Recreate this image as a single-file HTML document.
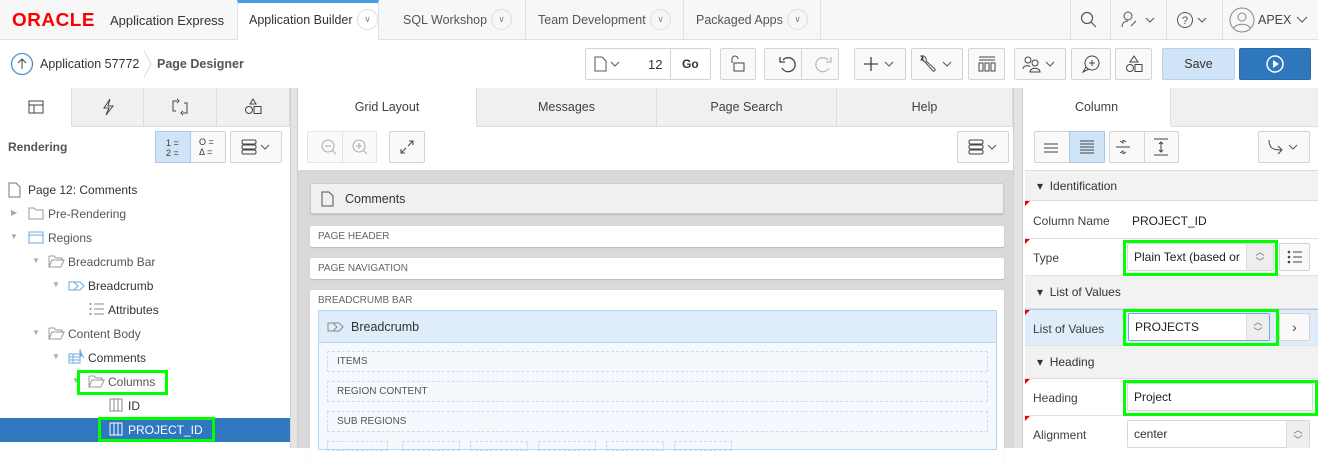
<!DOCTYPE html>
<html><head><meta charset="utf-8"><style>
*{box-sizing:border-box;margin:0;padding:0}
body{width:1318px;height:448px;overflow:hidden;font-family:"Liberation Sans",sans-serif;background:#fff;position:relative;color:#333;font-size:12px}
.a{position:absolute}
.btn{position:absolute;top:48px;height:32px;border:1px solid #d4d4d4;border-radius:2px;background:#f9f9f9;display:flex;align-items:center;justify-content:center;color:#444;font-size:13px}
.g{position:absolute;border:3px solid #00ff00}
.t{position:absolute;font-size:12px;color:#404040;white-space:nowrap}
.tab{position:absolute;top:88px;height:39px;background:#f0f0f0;border-right:1px solid #ddd;border-bottom:1px solid #ddd;display:flex;align-items:center;justify-content:center;font-size:12.5px;color:#404040}
.tab.on{background:#fff;border-bottom-color:#fff}
.box{position:absolute;background:#fff;border-radius:2px;box-shadow:0 1px 1px rgba(0,0,0,.15);font-size:10px;color:#666;padding-left:8px;display:flex;align-items:center}
.dash{position:absolute;left:327px;width:661px;height:21px;border:1px dashed #c8dff3;font-size:10px;color:#555;padding-left:9px;display:flex;align-items:center}
.hdr{position:absolute;left:1025px;width:293px;background:#f2f2f2;border-bottom:1px solid #ddd;font-size:12px;color:#333;padding-left:12px;display:flex;align-items:center}
.row{position:absolute;left:1025px;width:293px;border-bottom:1px solid #e2e2e2;font-size:12px}
.row .l{position:absolute;left:8px;color:#404040}
.row:before{content:"";position:absolute;left:0;top:0;border-top:5px solid #e00;border-right:5px solid transparent}
.sel{position:absolute;background:#fff;border:1px solid #d8d8d8;border-radius:2px;font-size:12px;color:#222;padding-left:6px;display:flex;align-items:center}
</style></head><body>
<!-- top bar -->
<div class="a" style="left:0;top:0;width:1318px;height:40px;background:#f7f7f7;border-bottom:1px solid #e0e0e0"></div>
<div class="t" style="left:12px;top:10px;font-size:18px;font-weight:bold;color:#f80000;letter-spacing:0.5px;transform:scaleX(1.05);transform-origin:left">ORACLE</div>
<div class="t" style="left:110px;top:13px;font-size:13px;color:#333">Application Express</div>
<div class="a" style="left:237px;top:0;width:142px;height:41px;background:#fff;border-top:3px solid #4a9ce0;border-left:1px solid #e0e0e0;border-right:1px solid #e0e0e0"></div>
<div class="t" style="left:249px;top:13px;font-size:12.5px;color:#333">Application Builder</div>
<div class="a" style="left:357px;top:9px;width:21px;height:21px;border:1px solid #ddd;border-radius:50%;font-size:9px;color:#888;text-align:center;line-height:19px">∨</div>
<div class="t" style="left:403px;top:13px;font-size:12.5px;color:#555">SQL Workshop</div>
<div class="a" style="left:491px;top:9px;width:21px;height:21px;border:1px solid #ddd;border-radius:50%;font-size:9px;color:#888;text-align:center;line-height:19px">∨</div>
<div class="a" style="left:525px;top:0;width:1px;height:40px;background:#e0e0e0"></div>
<div class="t" style="left:538px;top:13px;font-size:12.5px;color:#555">Team Development</div>
<div class="a" style="left:650px;top:9px;width:21px;height:21px;border:1px solid #ddd;border-radius:50%;font-size:9px;color:#888;text-align:center;line-height:19px">∨</div>
<div class="a" style="left:683px;top:0;width:1px;height:40px;background:#e0e0e0"></div>
<div class="t" style="left:696px;top:13px;font-size:12.5px;color:#555">Packaged Apps</div>
<div class="a" style="left:787px;top:9px;width:21px;height:21px;border:1px solid #ddd;border-radius:50%;font-size:9px;color:#888;text-align:center;line-height:19px">∨</div>
<div class="a" style="left:820px;top:0;width:1px;height:40px;background:#e0e0e0"></div>
<div class="a" style="left:1070px;top:0;width:1px;height:40px;background:#e0e0e0"></div>
<div class="a" style="left:1110px;top:0;width:1px;height:40px;background:#e0e0e0"></div>
<div class="a" style="left:1166px;top:0;width:1px;height:40px;background:#e0e0e0"></div>
<div class="a" style="left:1222px;top:0;width:1px;height:40px;background:#e0e0e0"></div>
<svg class="a" style="left:1080px;top:11px" width="18" height="18"><circle cx="7" cy="7" r="5.5" fill="none" stroke="#555" stroke-width="1.2"/><path d="M11 11l5 5" stroke="#555" stroke-width="1.2"/></svg>
<svg class="a" style="left:1120px;top:10px" width="40" height="20"><circle cx="8" cy="6" r="4" fill="none" stroke="#555"/><path d="M2 17c0-5 4-6 6-6M11 16l5-5" stroke="#555" fill="none"/><path d="M26 8l4 4 4-4" stroke="#555" fill="none"/></svg>
<svg class="a" style="left:1176px;top:10px" width="40" height="20"><circle cx="9" cy="10" r="7.5" fill="none" stroke="#555"/><text x="6" y="14" font-size="11" fill="#555" font-family="Liberation Sans">?</text><path d="M22 8l4 4 4-4" stroke="#555" fill="none"/></svg>
<svg class="a" style="left:1229px;top:7px" width="26" height="26"><circle cx="13" cy="13" r="12" fill="none" stroke="#888"/><circle cx="13" cy="10" r="4" fill="none" stroke="#888"/><path d="M5 21c2-5 14-5 16 0" stroke="#888" fill="none"/></svg>
<div class="t" style="left:1258px;top:13px;font-size:12.5px;color:#444">APEX</div>
<svg class="a" style="left:1296px;top:15px" width="12" height="10"><path d="M1 2l5 5 5-5" stroke="#555" fill="none"/></svg>
<!-- toolbar -->
<div class="a" style="left:0;top:88px;width:1318px;height:1px;background:#d8d8d8"></div>
<svg class="a" style="left:10px;top:52px" width="24" height="24"><circle cx="12" cy="12" r="10.5" fill="none" stroke="#4a90d9" stroke-width="1.3"/><path d="M12 17V7M8 11l4-4 4 4" stroke="#444" fill="none"/></svg>
<div class="t" style="left:40px;top:57px;font-size:12.5px;color:#333">Application 57772</div>
<svg class="a" style="left:143px;top:50px" width="10" height="28"><path d="M1 1l7 13-7 13" stroke="#ddd" fill="none"/></svg>
<div class="t" style="left:157px;top:57px;font-size:12.5px;font-weight:bold;color:#555">Page Designer</div>
<div class="btn" style="left:585px;width:126px;background:#fff;justify-content:flex-start"></div>
<svg class="a" style="left:594px;top:56px" width="30" height="16"><path d="M1 1h7l4 4v10H1z" fill="none" stroke="#555"/><path d="M17 6l4 4 4-4" stroke="#555" fill="none"/></svg>
<div class="t" style="left:648px;top:57px;font-size:13px;color:#333">12</div>
<div class="a" style="left:670px;top:48px;width:1px;height:32px;background:#d4d4d4"></div>
<div class="t" style="left:682px;top:57px;font-size:12px;font-weight:bold;color:#333">Go</div>
<div class="btn" style="left:720px;width:36px"><svg width="16" height="18"><rect x="4" y="8" width="10" height="8" fill="none" stroke="#444"/><path d="M2 8V4a3 3 0 0 1 6 0" fill="none" stroke="#444"/></svg></div>
<div class="btn" style="left:764px;width:75px"></div>
<div class="a" style="left:801px;top:48px;width:1px;height:32px;background:#d4d4d4"></div>
<svg class="a" style="left:778px;top:55px" width="20" height="20"><path d="M5 5a7 7 0 1 1-1 8" fill="none" stroke="#444" stroke-width="1.3"/><path d="M2 2v5h5" fill="none" stroke="#444" stroke-width="1.3"/></svg>
<svg class="a" style="left:813px;top:55px" width="20" height="20"><path d="M15 5a7 7 0 1 0 1 8" fill="none" stroke="#bbb" stroke-width="1.3"/><path d="M18 2v5h-5" fill="none" stroke="#bbb" stroke-width="1.3"/></svg>
<div class="btn" style="left:854px;width:52px"><svg width="34" height="16"><path d="M8 1v14M1 8h14" stroke="#444" stroke-width="1.3"/><path d="M22 6l4 4 4-4" stroke="#555" fill="none"/></svg></div>
<div class="btn" style="left:911px;width:52px"><svg width="36" height="20"><path d="M4 2a4 4 0 0 0 2 6l8 9a1.5 1.5 0 0 0 2-2l-9-8a4 4 0 0 0-5-5l2 2v2H2z" fill="none" stroke="#444"/><path d="M24 8l4 4 4-4" stroke="#555" fill="none"/></svg></div>
<div class="btn" style="left:968px;width:37px"><svg width="18" height="16"><path d="M1 1h16M1 4h16" stroke="#444"/><rect x="1" y="7" width="4" height="8" fill="none" stroke="#444"/><rect x="7" y="7" width="4" height="8" fill="none" stroke="#444"/><rect x="13" y="7" width="4" height="8" fill="none" stroke="#444"/></svg></div>
<div class="btn" style="left:1014px;width:52px"><svg width="36" height="18"><circle cx="6" cy="5" r="3" fill="none" stroke="#444"/><circle cx="13" cy="8" r="3" fill="none" stroke="#444"/><path d="M1 14c0-4 7-4 7-2M8 17c0-5 10-5 10 0z" fill="none" stroke="#444"/><path d="M24 7l4 4 4-4" stroke="#555" fill="none"/></svg></div>
<div class="btn" style="left:1071px;width:40px"><svg width="20" height="20"><circle cx="11" cy="9" r="7" fill="none" stroke="#444"/><path d="M5 13l-3 5 6-3M11 6v6M8 9h6" fill="none" stroke="#444"/></svg></div>
<div class="btn" style="left:1115px;width:37px"><svg width="18" height="18"><path d="M9 1l4 6H5z" fill="none" stroke="#444"/><circle cx="5" cy="13" r="3.5" fill="none" stroke="#444"/><rect x="10" y="9.5" width="7" height="7" fill="none" stroke="#444"/></svg></div>
<div class="btn" style="left:1162px;width:73px;background:#cfe4f7;border-color:#b6d3ee;color:#333;font-size:12.5px">Save</div>
<div class="btn" style="left:1239px;width:72px;background:#2e77bd;border-color:#2a6bab"><svg width="20" height="20"><circle cx="10" cy="10" r="8" fill="none" stroke="#fff" stroke-width="1.5"/><path d="M8 6l6 4-6 4z" fill="#fff"/></svg></div>
<!-- left panel -->
<div class="a" style="left:290px;top:88px;width:8px;height:360px;background:#e4e4e4;border-left:1px solid #d0d0d0;border-right:1px solid #d0d0d0"></div>
<div class="tab on" style="left:0;width:72px"><svg width="16" height="14"><rect x="1" y="1" width="14" height="12" fill="none" stroke="#444"/><path d="M1 5h14M6 5v8" stroke="#444"/></svg></div>
<div class="tab" style="left:72px;width:72px"><svg width="14" height="18"><path d="M9 1L3 10h5l-3 7 7-9H7z" fill="none" stroke="#444"/></svg></div>
<div class="tab" style="left:144px;width:73px"><svg width="18" height="18"><path d="M6 3H2v10h3M12 15h4V5h-3" fill="none" stroke="#444"/><path d="M6 1l2 2-2 2M12 13l-2 2 2 2" fill="none" stroke="#444"/></svg></div>
<div class="tab" style="left:217px;width:73px"><svg width="18" height="18"><path d="M9 1l3 5H6z" fill="none" stroke="#444"/><circle cx="5" cy="12" r="3.5" fill="none" stroke="#444"/><rect x="10" y="8.5" width="7" height="7" fill="none" stroke="#444"/></svg></div>
<div class="t" style="left:8px;top:140px;font-size:12px;font-weight:bold;color:#555">Rendering</div>
<div class="a" style="left:155px;top:131px;width:71px;height:32px;border:1px solid #cfcfcf;border-radius:2px;background:#f9f9f9"></div>
<div class="a" style="left:155px;top:131px;width:36px;height:32px;border:1px solid #a9c9e8;background:#cfe4f7;font-size:9px;line-height:10px;padding:6px 0 0 10px;color:#333">1 =<br>2 =</div>
<div class="a" style="left:199px;top:137px;font-size:9px;line-height:10px;color:#333">O =<br>Δ =</div>
<div class="btn" style="left:230px;top:131px;width:52px"><svg width="36" height="18"><rect x="4" y="2" width="14" height="4" rx="1.5" fill="none" stroke="#444"/><rect x="4" y="7" width="14" height="4" rx="1.5" fill="none" stroke="#444"/><rect x="4" y="12" width="14" height="4" rx="1.5" fill="none" stroke="#444"/><path d="M23 7l4 4 4-4" stroke="#555" fill="none"/></svg></div>
<!-- tree -->
<div class="a" style="left:0;top:418px;width:290px;height:24px;background:#2f78bf"></div>
<svg class="a" style="left:8px;top:182px" width="14" height="16"><path d="M1 1h7l4 4v10H1z" fill="none" stroke="#777"/></svg>
<div class="t" style="left:28px;top:183px;color:#333">Page 12: Comments</div>
<div class="t" style="left:11px;top:208px;font-size:8px;color:#aaa">▶</div>
<svg class="a" style="left:28px;top:207px" width="16" height="13"><path d="M1 1h5l2 2h7v9H1z" fill="none" stroke="#999"/></svg>
<div class="t" style="left:48px;top:207px;color:#555">Pre-Rendering</div>
<div class="t" style="left:10px;top:232px;font-size:8px;color:#aaa">▼</div>
<svg class="a" style="left:28px;top:231px" width="16" height="13"><rect x="1" y="1" width="14" height="11" fill="none" stroke="#6aaae4"/><path d="M1 4h14" stroke="#6aaae4"/></svg>
<div class="t" style="left:48px;top:231px;color:#555">Regions</div>
<div class="t" style="left:32px;top:256px;font-size:8px;color:#aaa">▼</div>
<svg class="a" style="left:48px;top:255px" width="17" height="13"><path d="M1 1h5l2 2h6v2M1 1v11h12l3-7H4l-3 7" fill="none" stroke="#999"/></svg>
<div class="t" style="left:68px;top:255px;color:#555">Breadcrumb Bar</div>
<div class="t" style="left:52px;top:280px;font-size:8px;color:#aaa">▼</div>
<svg class="a" style="left:68px;top:281px" width="18" height="10"><path d="M1 1h11l4 4-4 4H1z M6 1l4 4-4 4" fill="none" stroke="#6aaae4"/></svg>
<div class="t" style="left:88px;top:279px;color:#333">Breadcrumb</div>
<svg class="a" style="left:89px;top:302px" width="16" height="14"><path d="M5 2h10M5 7h10M5 12h10" stroke="#888"/><circle cx="1.5" cy="2" r="1" fill="#888"/><circle cx="1.5" cy="7" r="1" fill="#888"/><circle cx="1.5" cy="12" r="1" fill="#888"/></svg>
<div class="t" style="left:108px;top:303px;color:#333">Attributes</div>
<div class="t" style="left:32px;top:328px;font-size:8px;color:#aaa">▼</div>
<svg class="a" style="left:48px;top:327px" width="17" height="13"><path d="M1 1h5l2 2h6v2M1 1v11h12l3-7H4l-3 7" fill="none" stroke="#999"/></svg>
<div class="t" style="left:68px;top:327px;color:#555">Content Body</div>
<div class="t" style="left:52px;top:352px;font-size:8px;color:#aaa">▼</div>
<svg class="a" style="left:68px;top:349px" width="18" height="16"><rect x="1" y="5" width="11" height="9" fill="none" stroke="#6aaae4"/><path d="M1 8h11M1 11h11M5 5v9" stroke="#6aaae4"/><path d="M12 0v8l2-2 2 3" fill="#6aaae4" stroke="#6aaae4"/></svg>
<div class="t" style="left:88px;top:351px;color:#333">Comments</div>
<div class="t" style="left:72px;top:376px;font-size:8px;color:#aaa">▼</div>
<svg class="a" style="left:88px;top:375px" width="17" height="13"><path d="M1 1h5l2 2h6v2M1 1v11h12l3-7H4l-3 7" fill="none" stroke="#999"/></svg>
<div class="t" style="left:108px;top:375px;color:#555">Columns</div>
<svg class="a" style="left:109px;top:398px" width="14" height="14"><rect x="1" y="1" width="12" height="12" fill="none" stroke="#888"/><path d="M5 1v12M9 1v12" stroke="#888"/></svg>
<div class="t" style="left:128px;top:399px;color:#333">ID</div>
<svg class="a" style="left:109px;top:422px" width="14" height="14"><rect x="1" y="1" width="12" height="12" fill="none" stroke="#fff"/><path d="M5 1v12M9 1v12" stroke="#fff"/></svg>
<div class="t" style="left:128px;top:423px;color:#fff">PROJECT_ID</div>
<div class="g" style="left:77px;top:370px;width:91px;height:25px"></div>
<div class="g" style="left:98px;top:417px;width:117px;height:25px"></div>
<!-- middle -->
<div class="tab on" style="left:298px;width:179px">Grid Layout</div>
<div class="tab" style="left:477px;width:180px">Messages</div>
<div class="tab" style="left:657px;width:180px">Page Search</div>
<div class="tab" style="left:837px;width:176px">Help</div>
<div class="btn" style="left:307px;top:131px;width:70px;background:#fafafa;border-color:#e4e4e4"><svg width="60" height="18"><circle cx="16" cy="8" r="6" fill="none" stroke="#aaa"/><path d="M20 12l4 4M13 8h6" stroke="#aaa"/><circle cx="47" cy="8" r="6" fill="none" stroke="#aaa"/><path d="M51 12l4 4M44 8h6M47 5v6" stroke="#aaa"/></svg></div>
<div class="a" style="left:342px;top:131px;width:1px;height:32px;background:#e4e4e4"></div>
<div class="btn" style="left:389px;top:131px;width:36px"><svg width="16" height="16"><path d="M2 14l5-5M9 7l5-5M10 2h4v4M2 10v4h4" fill="none" stroke="#444"/></svg></div>
<div class="btn" style="left:957px;top:131px;width:52px"><svg width="36" height="18"><rect x="4" y="2" width="14" height="4" rx="1.5" fill="none" stroke="#444"/><rect x="4" y="7" width="14" height="4" rx="1.5" fill="none" stroke="#444"/><rect x="4" y="12" width="14" height="4" rx="1.5" fill="none" stroke="#444"/><path d="M23 7l4 4 4-4" stroke="#555" fill="none"/></svg></div>
<div class="a" style="left:298px;top:170px;width:715px;height:278px;background:#d9d9d9"></div>
<div class="a" style="left:1013px;top:88px;width:10px;height:360px;background:#e4e4e4;border-left:1px solid #d0d0d0;border-right:1px solid #d0d0d0"></div>
<div class="box" style="left:310px;top:183px;width:694px;height:31px;background:#eff0f1;border:1px solid #ccc;font-size:12.5px;color:#333;padding-left:10px"><svg width="14" height="16" style="margin-right:10px"><path d="M1 1h7l4 4v10H1z" fill="none" stroke="#555"/></svg>Comments</div>
<div class="box" style="left:310px;top:226px;width:694px;height:21px">PAGE HEADER</div>
<div class="box" style="left:310px;top:258px;width:694px;height:21px">PAGE NAVIGATION</div>
<div class="box" style="left:310px;top:290px;width:694px;height:170px;align-items:flex-start;padding-top:5px">BREADCRUMB BAR</div>
<div class="a" style="left:318px;top:310px;width:679px;height:140px;background:#f5f9fd;border:1px solid #b4d6f3"></div>
<div class="a" style="left:319px;top:311px;width:677px;height:32px;background:#deedf9;border-bottom:1px solid #b4d6f3;font-size:12.5px;color:#333;display:flex;align-items:center;padding-left:8px"><svg width="18" height="10" style="margin-right:6px"><path d="M1 1h11l4 4-4 4H1z M6 1l4 4-4 4" fill="none" stroke="#888"/></svg>Breadcrumb</div>
<div class="dash" style="top:351px">ITEMS</div>
<div class="dash" style="top:381px">REGION CONTENT</div>
<div class="dash" style="top:411px">SUB REGIONS</div>
<div class="a" style="left:327px;top:441px;width:61px;height:10px;border:1px dashed #c8dff3"></div>
<div class="a" style="left:402px;top:441px;width:58px;height:10px;border:1px dashed #c8dff3"></div>
<div class="a" style="left:470px;top:441px;width:58px;height:10px;border:1px dashed #c8dff3"></div>
<div class="a" style="left:538px;top:441px;width:58px;height:10px;border:1px dashed #c8dff3"></div>
<div class="a" style="left:606px;top:441px;width:58px;height:10px;border:1px dashed #c8dff3"></div>
<div class="a" style="left:674px;top:441px;width:58px;height:10px;border:1px dashed #c8dff3"></div>
<!-- right -->
<div class="tab on" style="left:1023px;width:148px">Column</div>
<div class="tab" style="left:1171px;width:147px;border-right:none"></div>
<div class="btn" style="left:1034px;top:131px;width:71px"></div>
<div class="a" style="left:1069px;top:131px;width:36px;height:32px;background:#cfe4f7;border:1px solid #a9c9e8"></div>
<svg class="a" style="left:1043px;top:140px" width="60" height="16"><path d="M1 4h14M1 8h14M1 12h14" stroke="#444"/><path d="M37 1h14M37 4h14M37 7h14M37 10h14M37 13h14" stroke="#444"/></svg>
<div class="btn" style="left:1109px;top:131px;width:70px"><svg width="60" height="18"><path d="M9 2v3l-3-2M9 2l3 2M2 9h14M9 16v-3l-3 2M9 16l3-2" fill="none" stroke="#444"/><path d="M40 1h14M40 17h14M47 4v10M45 6l2-2 2 2M45 12l2 2 2-2" fill="none" stroke="#444"/></svg></div>
<div class="a" style="left:1144px;top:131px;width:1px;height:32px;background:#d4d4d4"></div>
<div class="btn" style="left:1258px;top:131px;width:52px"><svg width="36" height="18"><path d="M3 2c0 8 4 10 12 10M12 8l4 4-4 4" fill="none" stroke="#444"/><path d="M23 7l4 4 4-4" stroke="#555" fill="none"/></svg></div>
<div class="hdr" style="top:170px;height:31px;border-top:1px solid #ddd">▾&nbsp; Identification</div>
<div class="row" style="top:201px;height:38px"><span class="l" style="top:13px">Column Name</span><span style="position:absolute;left:107px;top:13px;color:#222">PROJECT_ID</span></div>
<div class="row" style="top:239px;height:37px"><span class="l" style="top:12px">Type</span></div>
<div class="sel" style="left:1127px;top:243px;width:147px;height:28px">Plain Text (based or</div>
<div class="a" style="left:1246px;top:244px;width:27px;height:26px;background:#eee;border-left:1px solid #ddd;font-size:9px;line-height:10px;text-align:center;padding-top:3px;color:#666">︿<br>﹀</div>
<div class="btn" style="left:1279px;top:243px;width:31px;height:28px"><svg width="16" height="14"><path d="M6 2h9M6 7h9M6 12h9" stroke="#444"/><circle cx="2" cy="2" r="1.3" fill="#444"/><circle cx="2" cy="7" r="1.3" fill="#444"/><circle cx="2" cy="12" r="1.3" fill="#444"/></svg></div>
<div class="hdr" style="top:276px;height:33px">▾&nbsp; List of Values</div>
<div class="row" style="top:309px;height:37px;background:#deedf9;border-top:1px solid #a9cdef"><span class="l" style="top:12px">List of Values</span></div>
<div class="sel" style="left:1128px;top:313px;width:142px;height:28px;border-color:#6fa8dc">PROJECTS</div>
<div class="a" style="left:1246px;top:314px;width:23px;height:26px;background:#eee;border-left:1px solid #ddd;font-size:9px;line-height:10px;text-align:center;padding-top:3px;color:#666">︿<br>﹀</div>
<div class="btn" style="left:1279px;top:313px;width:31px;height:28px;font-size:14px">›</div>
<div class="hdr" style="top:346px;height:33px">▾&nbsp; Heading</div>
<div class="row" style="top:379px;height:37px"><span class="l" style="top:12px">Heading</span></div>
<div class="sel" style="left:1127px;top:383px;width:186px;height:28px">Project</div>
<div class="row" style="top:416px;height:32px;border-bottom:none"><span class="l" style="top:12px">Alignment</span></div>
<div class="sel" style="left:1127px;top:420px;width:183px;height:28px;color:#333">center</div>
<div class="a" style="left:1286px;top:421px;width:23px;height:27px;background:#eee;border-left:1px solid #ddd;font-size:9px;line-height:10px;text-align:center;padding-top:4px;color:#666">︿<br>﹀</div>
<div class="g" style="left:1123px;top:240px;width:155px;height:36px"></div>
<div class="g" style="left:1123px;top:309px;width:156px;height:37px"></div>
<div class="g" style="left:1123px;top:380px;width:195px;height:36px"></div>
</body></html>
